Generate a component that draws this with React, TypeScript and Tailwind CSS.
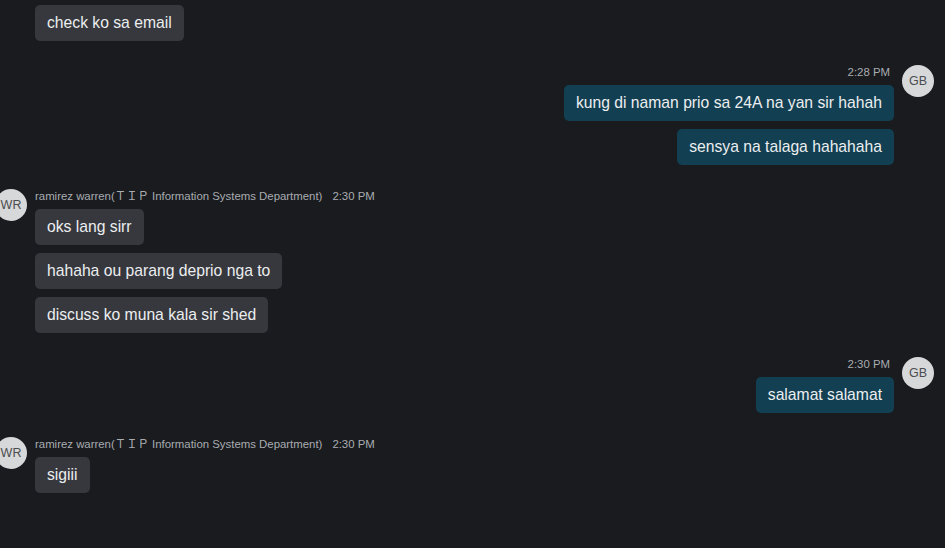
import React from "react"

type Msg = {
  side: "in" | "out"
  initials: string
  name?: string
  time: string
  lines: string[]
}

const messages: Msg[] = [
  {
    side: "out",
    initials: "GB",
    time: "2:28 PM",
    lines: ["kung di naman prio sa 24A na yan sir hahah", "sensya na talaga hahahaha"],
  },
  {
    side: "in",
    initials: "WR",
    name: "ramirez warren(ＴＩＰ Information Systems Department)",
    time: "2:30 PM",
    lines: ["oks lang sirr", "hahaha ou parang deprio nga to", "discuss ko muna kala sir shed"],
  },
  {
    side: "out",
    initials: "GB",
    time: "2:30 PM",
    lines: ["salamat salamat"],
  },
  {
    side: "in",
    initials: "WR",
    name: "ramirez warren(ＴＩＰ Information Systems Department)",
    time: "2:30 PM",
    lines: ["sigiii"],
  },
]

const Avatar = ({ initials }: { initials: string }) => (
  <div className="w-8 h-8 shrink-0 rounded-full bg-[#d7d8d9] text-[#4b4d50] text-[12.5px] flex items-center justify-center">
    {initials}
  </div>
)

const Bubble = ({ text, out }: { text: string; out: boolean }) => (
  <div
    className={`px-3 py-2 rounded-[5px] text-[15.7px] leading-5 text-[#eceef0] ${
      out ? "bg-[#123f51]" : "bg-[#36383d]"
    }`}
  >
    {text}
  </div>
)

const Group = ({ msg }: { msg: Msg }) => {
  const out = msg.side === "out"
  return (
    <div className={`flex gap-2 ${out ? "flex-row-reverse pr-[11px]" : "-ml-[5px]"}`}>
      <Avatar initials={msg.initials} />
      <div className={`flex flex-col ${out ? "items-end" : "items-start"}`}>
        <div
          className={`h-4 mb-1 flex items-center gap-[10px] text-[11.4px] text-[#a9acb1] whitespace-nowrap ${
            out ? "pr-1" : ""
          }`}
        >
          {msg.name && <span>{msg.name}</span>}
          <span>{msg.time}</span>
        </div>
        <div className={`flex flex-col gap-2 ${out ? "items-end" : "items-start"}`}>
          {msg.lines.map((l, i) => (
            <Bubble key={i} text={l} out={out} />
          ))}
        </div>
      </div>
    </div>
  )
}

export default function App() {
  return (
    <div
      className="w-[945px] h-[548px] overflow-hidden bg-[#191b1f] pt-[5px]"
      style={{ fontFamily: '"Segoe UI", "Liberation Sans", "Noto Sans CJK JP", sans-serif' }}
    >
      <div className="pl-[35px] flex">
        <Bubble text="check ko sa email" out={false} />
      </div>
      <div className="mt-6 flex flex-col gap-6">
        {messages.map((m, i) => (
          <Group key={i} msg={m} />
        ))}
      </div>
    </div>
  )
}
